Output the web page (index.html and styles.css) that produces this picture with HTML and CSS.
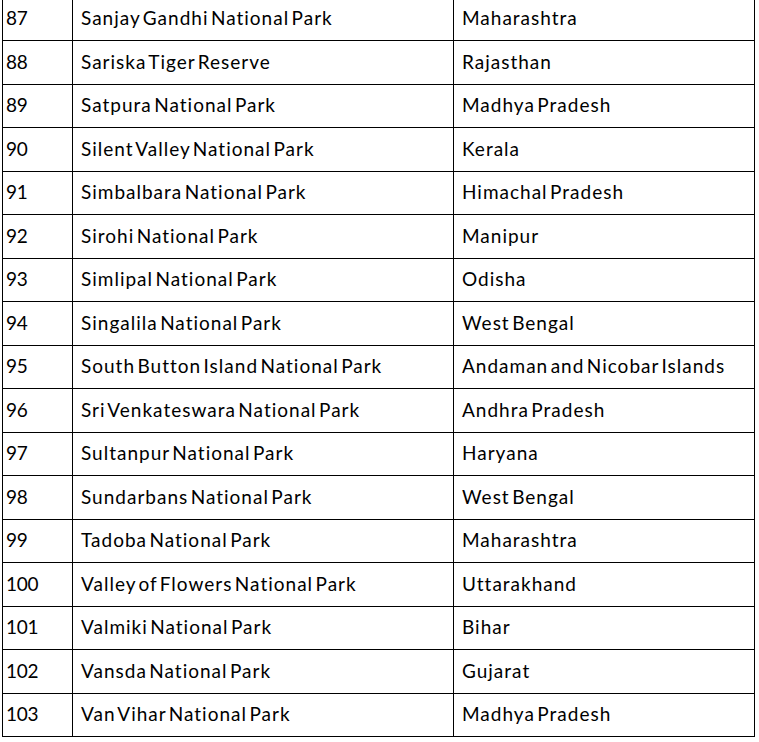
FILE: index.html
```html
<!DOCTYPE html>
<html>
<head>
<meta charset="utf-8">
<link rel="stylesheet" href="styles.css">
</head>
<body>
<div class="parks">
  <div class="cell num">87</div><div class="cell">Sanjay Gandhi National Park</div><div class="cell">Maharashtra</div>
  <div class="cell num">88</div><div class="cell">Sariska Tiger Reserve</div><div class="cell">Rajasthan</div>
  <div class="cell num">89</div><div class="cell">Satpura National Park</div><div class="cell">Madhya Pradesh</div>
  <div class="cell num">90</div><div class="cell">Silent Valley National Park</div><div class="cell">Kerala</div>
  <div class="cell num">91</div><div class="cell">Simbalbara National Park</div><div class="cell">Himachal Pradesh</div>
  <div class="cell num">92</div><div class="cell">Sirohi National Park</div><div class="cell">Manipur</div>
  <div class="cell num">93</div><div class="cell">Simlipal National Park</div><div class="cell">Odisha</div>
  <div class="cell num">94</div><div class="cell">Singalila National Park</div><div class="cell">West Bengal</div>
  <div class="cell num">95</div><div class="cell">South Button Island National Park</div><div class="cell">Andaman and Nicobar Islands</div>
  <div class="cell num">96</div><div class="cell">Sri Venkateswara National Park</div><div class="cell">Andhra Pradesh</div>
  <div class="cell num">97</div><div class="cell">Sultanpur National Park</div><div class="cell">Haryana</div>
  <div class="cell num">98</div><div class="cell">Sundarbans National Park</div><div class="cell">West Bengal</div>
  <div class="cell num">99</div><div class="cell">Tadoba National Park</div><div class="cell">Maharashtra</div>
  <div class="cell num">100</div><div class="cell">Valley of Flowers National Park</div><div class="cell">Uttarakhand</div>
  <div class="cell num">101</div><div class="cell">Valmiki National Park</div><div class="cell">Bihar</div>
  <div class="cell num">102</div><div class="cell">Vansda National Park</div><div class="cell">Gujarat</div>
  <div class="cell num">103</div><div class="cell">Van Vihar National Park</div><div class="cell">Madhya Pradesh</div>
</div>
</body>
</html>
```
FILE: styles.css
```css
html, body {
  margin: 0;
  padding: 0;
  background: #ffffff;
}
body {
  overflow: hidden;
}
.parks {
  display: grid;
  grid-template-columns: 69px 380px 300px;
  grid-auto-rows: 42.5px;
  gap: 1px;
  padding: 1px;
  background: #000000;
  width: max-content;
  margin: -3.5px 0 0 2px;
  font-family: Lato, "Open Sans", sans-serif;
  font-size: 19px;
  color: #000000;
}
.cell {
  background: #ffffff;
  display: flex;
  align-items: center;
  padding: 0 0 2px 8px;
  white-space: nowrap;
  letter-spacing: 1px;
  word-spacing: -3.4px;
}
.cell.num {
  padding-left: 3px;
  letter-spacing: -0.3px;
  word-spacing: 0;
}
```
